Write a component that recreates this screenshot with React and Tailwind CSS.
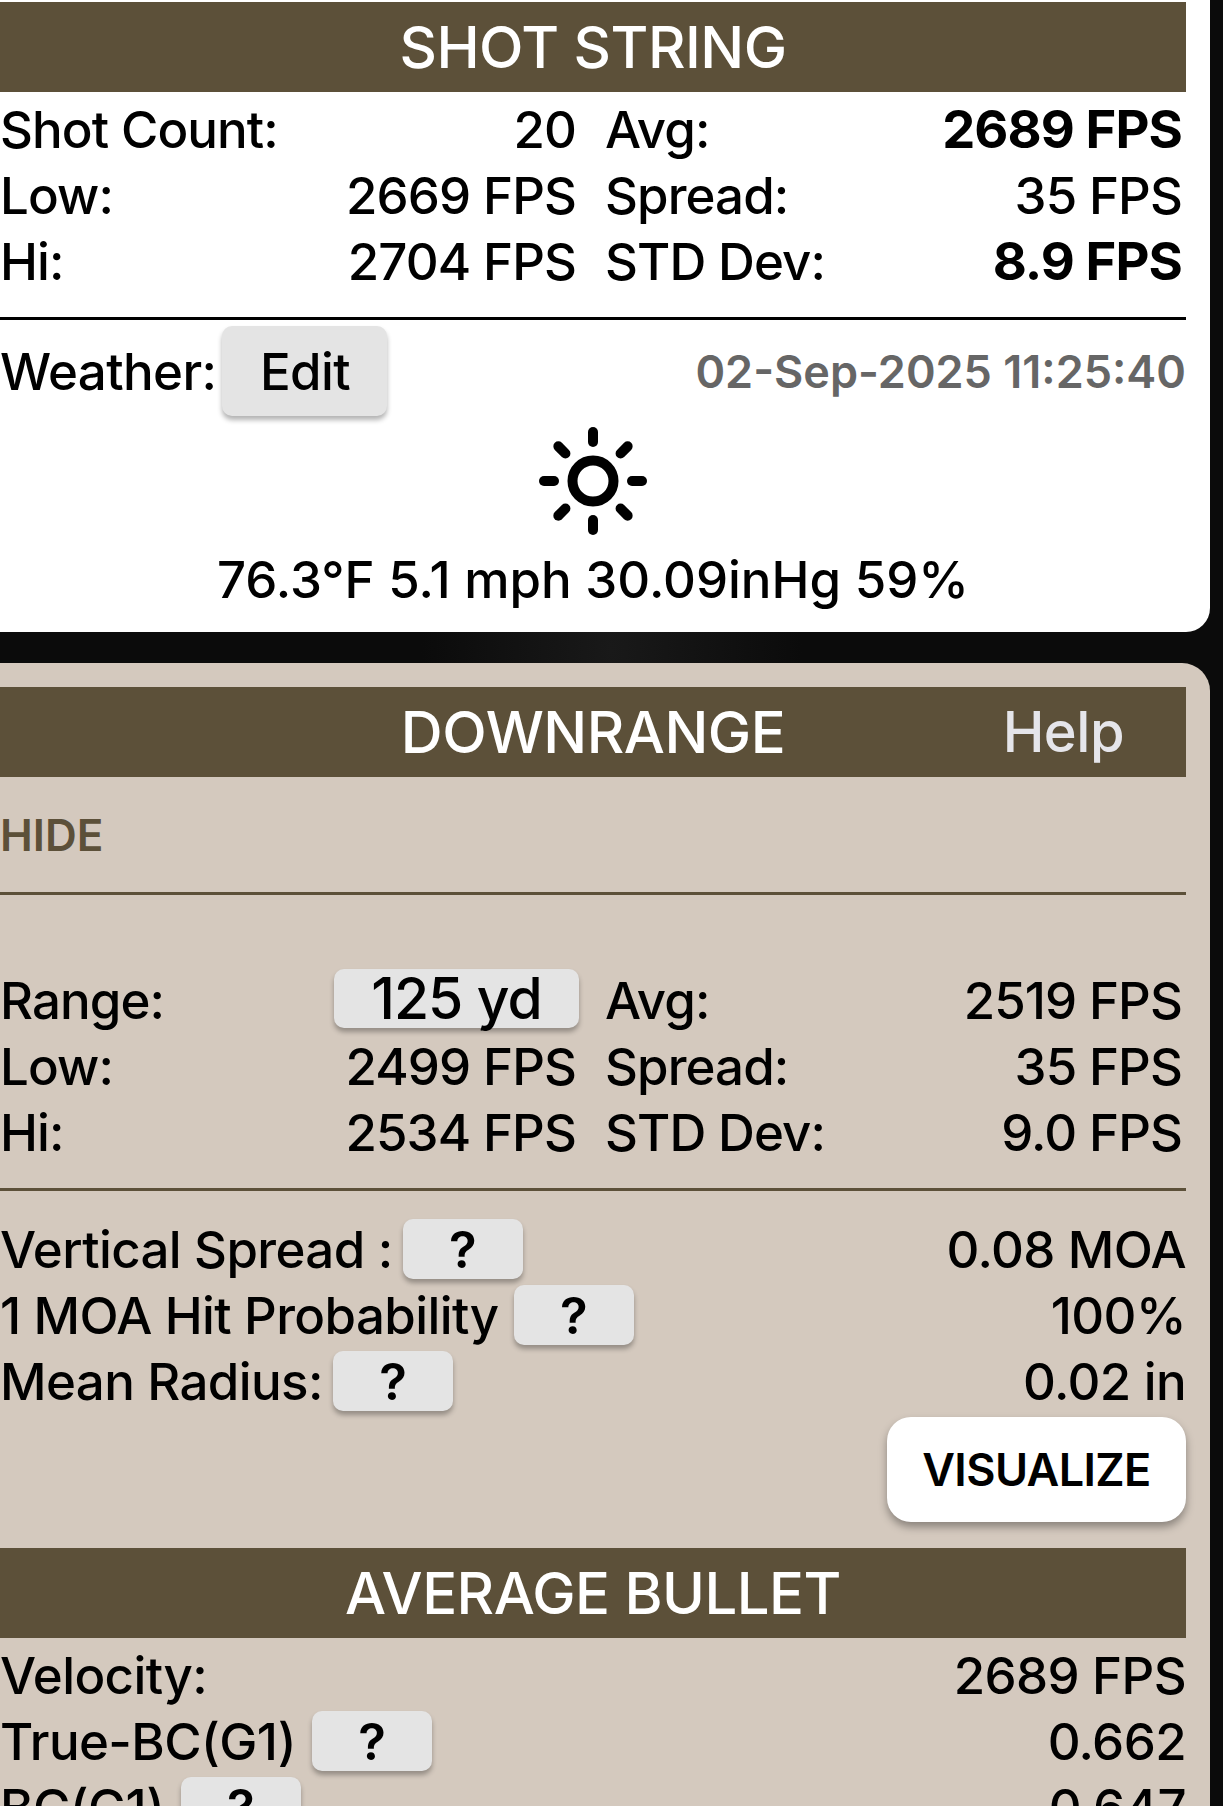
import React from 'react';

const FONT = { fontFamily: 'Inter, "Liberation Sans", sans-serif' };

function SectionHeader({ title, help }) {
  return (
    <div className="grid grid-cols-[1fr_auto_1fr] items-center h-[90px] bg-[#5c5039] text-white text-[58px] font-medium tracking-[-0.5px] leading-none">
      <span />
      <span>{title}</span>
      {help ? <span className="justify-self-end pr-[62px] text-[56px] text-[#e5e5ea]">{help}</span> : <span />}
    </div>
  );
}

function GreyButton({ children, className }) {
  return (
    <button className={`flex items-center justify-center bg-[#e4e4e4] rounded-[10px] shadow-[0_4px_5px_rgba(0,0,0,0.3)] ${className}`}>
      {children}
    </button>
  );
}

function StatRow({ left, leftValue, right, rightValue, boldRight }) {
  return (
    <div className="grid grid-cols-[576px_577px] gap-x-[29px] h-[66px] items-center tracking-[-0.9px]">
      <div className="flex justify-between items-center">
        <span>{left}</span>
        {leftValue}
      </div>
      <div className="flex justify-between items-center">
        <span>{right}</span>
        <span className={boldRight ? 'font-bold text-[52.5px]' : ''}>{rightValue}</span>
      </div>
    </div>
  );
}

function InfoRow({ label, value, hasHelp = true, gap = 'gap-[16px]' }) {
  return (
    <div className="flex justify-between items-center h-[66px]">
      <div className={`flex items-center ${gap}`}>
        <span>{label}</span>
        {hasHelp && <GreyButton className="w-[120px] h-[60px] font-semibold">?</GreyButton>}
      </div>
      <span>{value}</span>
    </div>
  );
}

function Sun() {
  const rays = [0, 45, 90, 135, 180, 225, 270, 315];
  return (
    <svg width="110" height="110" viewBox="-55 -55 110 110" fill="none" stroke="#000" strokeWidth="10" strokeLinecap="round">
      <circle cx="0" cy="0" r="20.5" />
      {rays.map((a) => (
        <line key={a} x1="0" y1="-39" x2="0" y2="-49" transform={`rotate(${a})`} />
      ))}
    </svg>
  );
}

export default function App() {
  return (
    <div
      className="w-[1223px] h-[1806px] overflow-hidden bg-[#0b0b0b] bg-[radial-gradient(ellipse_at_50%_36%,#191919_0%,#0b0b0b_22%)] text-black text-[51px] leading-none font-medium tracking-[-0.6px]"
      style={FONT}
    >
      <section className="w-[1210px] h-[632px] bg-white rounded-br-[24px] pt-[2px] pr-[24px]">
        <SectionHeader title="SHOT STRING" />
        <div className="pt-[4px] pr-[3px]">
          <StatRow left="Shot Count:" leftValue={<span>20</span>} right="Avg:" rightValue="2689 FPS" boldRight />
          <StatRow left="Low:" leftValue={<span>2669 FPS</span>} right="Spread:" rightValue="35 FPS" />
          <StatRow left="Hi:" leftValue={<span>2704 FPS</span>} right="STD Dev:" rightValue="8.9 FPS" boldRight />
        </div>
        <div className="h-[3px] bg-black mt-[23px]" />
        <div className="flex justify-between items-center mt-[6px] h-[90px]">
          <div className="flex items-center gap-[6px]">
            <span>Weather:</span>
            <GreyButton className="w-[165px] h-[90px]">Edit</GreyButton>
          </div>
          <span className="text-[#666666] text-[45px] font-semibold tracking-[0px]">02-Sep-2025 11:25:40</span>
        </div>
        <div className="flex flex-col items-center mt-[10px]">
          <Sun />
          <span className="mt-[18px] tracking-[0px]">76.3°F 5.1 mph 30.09inHg 59%</span>
        </div>
      </section>

      <section className="w-[1210px] h-[1143px] mt-[31px] bg-[#d4c9be] rounded-tr-[28px] pt-[24px] pr-[24px]">
        <SectionHeader title="DOWNRANGE" help="Help" />
        <div className="flex items-center h-[115px] text-[#5c5039] text-[44px] font-semibold tracking-[0px]">HIDE</div>
        <div className="h-[3px] bg-[#5c5039]" />
        <div className="mt-[72px] pr-[3px]">
          <StatRow
            left="Range:"
            leftValue={<GreyButton className="w-[245px] h-[59px] -mr-[3px] text-[57px] font-medium mb-[4px]">125 yd</GreyButton>}
            right="Avg:"
            rightValue="2519 FPS"
          />
          <StatRow left="Low:" leftValue={<span>2499 FPS</span>} right="Spread:" rightValue="35 FPS" />
          <StatRow left="Hi:" leftValue={<span>2534 FPS</span>} right="STD Dev:" rightValue="9.0 FPS" />
        </div>
        <div className="h-[3px] bg-[#5c5039] mt-[23px]" />
        <div className="mt-[25px]">
          <InfoRow label="Vertical Spread :" value="0.08 MOA" gap="gap-[10px]" />
          <InfoRow label="1 MOA Hit Probability" value="100%" gap="gap-[15px]" />
          <InfoRow label="Mean Radius:" value="0.02 in" gap="gap-[10px]" />
        </div>
        <div className="flex justify-end mt-[3px]">
          <button className="w-[299px] h-[105px] bg-white rounded-[24px] shadow-[0_5px_8px_rgba(0,0,0,0.35)] text-[45px] font-semibold">
            VISUALIZE
          </button>
        </div>
        <div className="mt-[26px]">
          <SectionHeader title="AVERAGE BULLET" />
        </div>
        <div className="pt-[4px]">
          <InfoRow label="Velocity:" value="2689 FPS" hasHelp={false} />
          <InfoRow label="True-BC(G1)" value="0.662" />
          <InfoRow label="BC(G1)" value="0.647" />
        </div>
      </section>
    </div>
  );
}
